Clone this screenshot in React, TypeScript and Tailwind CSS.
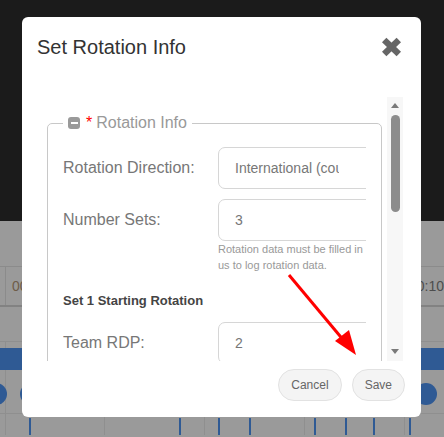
import React from "react";

const ticks = [29, 179, 218, 249, 314, 345, 373, 409];
const gridCols = [5, 104, 204, 304, 404];

function CloseIcon() {
  return (
    <svg width="21" height="20" viewBox="0 0 21 20" className="mt-[5px]">
      <line x1="3.2" y1="3" x2="17.8" y2="17" stroke="#666" strokeWidth="6.4" />
      <line x1="17.8" y1="3" x2="3.2" y2="17" stroke="#666" strokeWidth="6.4" />
    </svg>
  );
}

function Background() {
  return (
    <div className="flex flex-col">
      <div className="h-[221px] bg-[#1b1b1b]" />
      <div className="h-[46px] border-b border-[#8b8b8b]" />
      <div className="flex h-[40px] items-center justify-between border-b-2 border-[#828282]">
        <div className="ml-[5px] flex h-full items-center border-l border-[#8b8b8b] pl-[6px] text-[14px] text-[#6e5c48]">
          00
        </div>
        <div className="text-[14px] text-[#4d4d4d]">00:10</div>
      </div>
      <div className="h-[35px] border-b border-[#8f8f8f]" />
      <div className="ml-[5px] h-[6px] border-l border-[#8f8f8f]" />
      <div className="h-[22px] bg-[#2f5a94]" />
      <div className="relative h-[65px]">
        {gridCols.map((x) => (
          <div key={x} className="absolute top-0 bottom-0 w-px bg-[#8f8f8f]" style={{ left: x }} />
        ))}
        <div className="absolute left-0 right-0 top-[43px] h-px bg-[#8f8f8f]" />
        <div className="absolute left-[-15px] top-[13px] h-[22px] w-[22px] rounded-full bg-[#2f5a94]" />
        <div className="absolute left-[20px] top-[13px] h-[22px] w-[22px] rounded-full bg-[#2f5a94]" />
        <div className="absolute left-[415px] top-[13px] h-[22px] w-[22px] rounded-full bg-[#2f5a94]" />
        {ticks.map((x) => (
          <div key={x} className="absolute top-[48px] bottom-0 w-[2px] bg-[#2f5a94]" style={{ left: x }} />
        ))}
      </div>
    </div>
  );
}

function Field({ label, value }: { label: string; value: string }) {
  return (
    <div className="flex items-center">
      <div className="w-[155px] shrink-0 text-[16px] text-[#777]">{label}</div>
      <div className="flex h-[42px] w-[220px] shrink-0 items-center rounded-[7px] border border-[#d6d6d6] pl-[16px] text-[14px] text-[#777]">
        <span className="w-[104px] overflow-hidden whitespace-nowrap">{value}</span>
      </div>
    </div>
  );
}

function Scrollbar() {
  return (
    <div className="flex w-[16px] shrink-0 flex-col items-center bg-[#f7f7f7] pt-[6px] pb-[7px]">
      <div className="h-0 w-0 border-x-[4px] border-b-[5px] border-x-transparent border-b-[#7a7a7a]" />
      <div className="mt-[7px] h-[97px] w-[9px] rounded-full bg-[#8c8c8c]" />
      <div className="mt-auto h-0 w-0 border-x-[4px] border-t-[5px] border-x-transparent border-t-[#7a7a7a]" />
    </div>
  );
}

export default function App() {
  return (
    <div className="relative h-[437px] w-[444px] overflow-hidden bg-[#9a9a9a] font-['Liberation_Sans',Arial,sans-serif]">
      <Background />

      <div className="absolute left-[22px] top-[17px] flex h-[400px] w-[399px] flex-col rounded-[6px] bg-white">
        <div className="flex h-[80px] items-start justify-between pl-[15px] pr-[19px] pt-[15px]">
          <h2 className="text-[20px] leading-[30px] text-[#333]">Set Rotation Info</h2>
          <CloseIcon />
        </div>

        <div className="ml-[25px] mr-[18px] flex h-[264px]">
          <div className="min-w-0 flex-1 overflow-hidden pt-[16px]">
            <fieldset className="w-[335px] min-w-0 rounded-[5px] border border-[#c8c8c8] px-[15px] pb-[20px]">
              <legend className="px-[5px]">
                <span className="flex items-center text-[16px] leading-[20px] text-[#999]">
                  <span className="flex h-[12px] w-[12px] items-center justify-center rounded-[3px] bg-[#9a9a9a]">
                    <span className="h-[2px] w-[7px] bg-white" />
                  </span>
                  <span className="ml-[6px] text-[#f00]">*</span>
                  <span className="ml-[4px]">Rotation Info</span>
                </span>
              </legend>
              <div className="w-[303px] overflow-hidden pt-[14px]">
                <Field label="Rotation Direction:" value="International (counter-clockwise)" />
                <div className="mt-[10px]">
                  <Field label="Number Sets:" value="3" />
                </div>
                <div className="whitespace-nowrap pl-[155px] text-[11px] leading-[16px] text-[#999]">
                  <div>Rotation data must be filled in before allowing</div>
                  <div>us to log rotation data.</div>
                </div>
                <div className="mt-[18px] text-[13px] font-bold leading-[20px] text-[#444]">
                  Set 1 Starting Rotation
                </div>
                <div className="mt-[11px]">
                  <Field label="Team RDP:" value="2" />
                </div>
              </div>
            </fieldset>
          </div>
          <div className="w-[5px] shrink-0" />
          <Scrollbar />
        </div>

        <div className="mt-[8px] flex justify-end gap-[10px] pr-[16px]">
          <button className="h-[32px] rounded-full border border-[#e2e2e2] bg-[#f4f4f4] px-[12px] text-[12px] text-[#666]">
            Cancel
          </button>
          <button className="h-[32px] rounded-full border border-[#e2e2e2] bg-[#f4f4f4] px-[12px] text-[12px] text-[#666]">
            Save
          </button>
        </div>
      </div>

      <svg className="pointer-events-none absolute left-0 top-0" width="444" height="437">
        <line x1="289" y1="275" x2="345" y2="342" stroke="#f00" strokeWidth="3" />
        <polygon points="356,355 335,341 349,330" fill="#f00" />
      </svg>
    </div>
  );
}
